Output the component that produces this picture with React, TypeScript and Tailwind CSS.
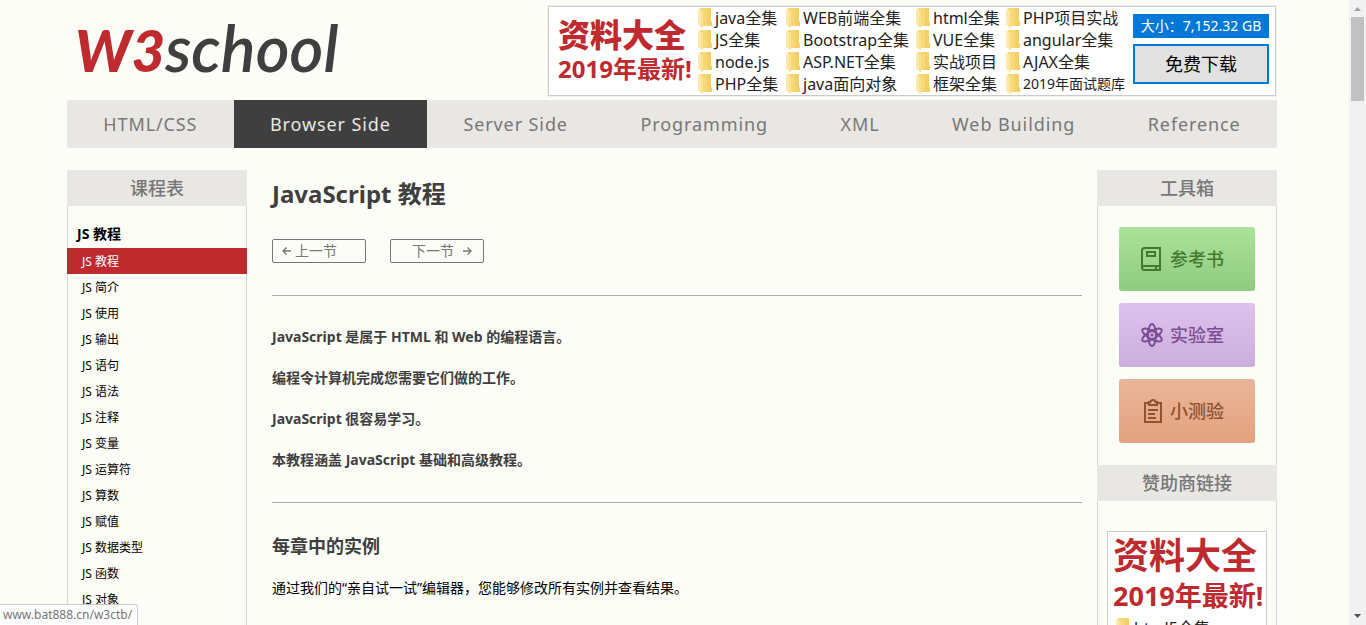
import clsx from "clsx";

const navItems = ["HTML/CSS", "Browser Side", "Server Side", "Programming", "XML", "Web Building", "Reference"];

const courses = [
    "JS 教程", "JS 简介", "JS 使用", "JS 输出", "JS 语句", "JS 语法", "JS 注释", "JS 变量",
    "JS 运算符", "JS 算数", "JS 赋值", "JS 数据类型", "JS 函数", "JS 对象"
];

const adLinks = [
    "java全集", "WEB前端全集", "html全集", "PHP项目实战",
    "JS全集", "Bootstrap全集", "VUE全集", "angular全集",
    "node.js", "ASP.NET全集", "实战项目", "AJAX全集",
    "PHP全集", "java面向对象", "框架全集", "2019年面试题库"
];

const intro = [
    "JavaScript 是属于 HTML 和 Web 的编程语言。",
    "编程令计算机完成您需要它们做的工作。",
    "JavaScript 很容易学习。",
    "本教程涵盖 JavaScript 基础和高级教程。"
];

const FolderIcon = () => (
    <svg width="14" height="20" viewBox="0 0 14 20" className="shrink-0" aria-hidden="true">
        <path d="M2 0H13V13L14 14V18H2Z" fill="#f7d878" />
        <path d="M9 0H13V13L14 14V18H9Z" fill="#f3cf66" />
        <path d="M0 0L5 4V20L0 17Z" fill="#ffe9a9" />
        <path d="M3 2L5 4V20L3 19Z" fill="#fbdf92" />
    </svg>
);

const BookIcon = () => (
    <svg width="22" height="24" viewBox="0 0 22 24" fill="none" stroke="currentColor" strokeWidth="2" aria-hidden="true">
        <path d="M19 19V1H3.500Q1 1 1 3.500V20.500Q1 23 3.500 23H19V19H3Q1 19 1 21M15 19V23" />
        <path d="M6 5H14V9H6Z" />
    </svg>
);

const AtomIcon = () => (
    <svg width="22" height="24" viewBox="0 0 22 24" fill="none" stroke="currentColor" strokeWidth="2" aria-hidden="true">
        <ellipse cx="11" cy="12" rx="4" ry="11" />
        <ellipse cx="11" cy="12" rx="4" ry="11" transform="rotate(60 11 12)" />
        <ellipse cx="11" cy="12" rx="4" ry="11" transform="rotate(120 11 12)" />
        <circle cx="11" cy="12" r="1.500" fill="currentColor" stroke="none" />
    </svg>
);

const ClipboardIcon = () => (
    <svg width="22" height="24" viewBox="-3 0 22 24" fill="none" stroke="currentColor" strokeWidth="2" aria-hidden="true">
        <path d="M5 4H1V23H17V4H13" />
        <path d="M5 3H6.500Q7 1 9 1T11.500 3H13V6H5Z" />
        <path d="M4 11H14M4 15H11M4 19H12" strokeWidth="1.800" />
    </svg>
);

const tools = [
    { label: "参考书", icon: <BookIcon />, color: "from-[#abe299] to-[#8fcb80] text-[#427a30]" },
    { label: "实验室", icon: <AtomIcon />, color: "from-[#dec2ed] to-[#cbaedb] text-[#7d4e96]" },
    { label: "小测验", icon: <ClipboardIcon />, color: "from-[#e9b59a] to-[#e4a27d] text-[#8f5330]" }
];

const PanelTitle = ({ children }: { children: string }) => (
    <h2 className="h-9 bg-[#e8e7e3] text-center text-lg leading-9 font-medium text-[#777]">{children}</h2>
);

const TopAd = () => (
    <div className="flex h-[90px] w-[728px] shrink-0 border border-[#ccc] bg-white pr-[6px] pl-[9px] shadow-[0_0_0_1px_#f0f0ec]">
        <div className="flex w-[140px] shrink-0 flex-col justify-center font-bold whitespace-nowrap text-[#be2a2e]">
            <strong className="text-[32px] leading-9">资料大全</strong>
            <span className="text-2xl leading-8">2019年最新!</span>
        </div>
        <div className="grid flex-1 grid-cols-[88px_130px_90px_1fr] grid-rows-4">
            {adLinks.map((link) => (
                <a key={link} href="#" className={clsx("flex h-[22px] items-center gap-[3px] leading-[22px] whitespace-nowrap text-[#222]", link.startsWith("2019") ? "text-sm" : "text-base")}>
                    <FolderIcon />
                    {link}
                </a>
            ))}
        </div>
        <div className="flex w-[136px] shrink-0 flex-col gap-[6px] pt-[7px]">
            <p className="h-6 bg-[#0078d7] text-center text-sm leading-6 whitespace-nowrap text-white">大小：7,152.32 GB</p>
            <button className="h-10 border-2 border-[#0078d7] bg-[#e1e1e1] text-lg leading-8 text-black">免费下载</button>
        </div>
    </div>
);

const Scrollbar = () => (
    <div className="flex w-[17px] shrink-0 flex-col items-center justify-between bg-[#f1f1f1]" aria-hidden="true">
        <div className="flex flex-col items-center">
            <svg width="17" height="17" viewBox="0 0 17 17"><path d="M5 11L8.500 7L12 11Z" fill="#a3a3a3" /></svg>
            <div className="h-[84px] w-[13px] bg-[#c1c1c1]" />
        </div>
        <svg width="17" height="17" viewBox="0 0 17 17"><path d="M5 6L8.500 10L12 6Z" fill="#505050" /></svg>
    </div>
);

const App = () => {
    return (
        <div className="flex h-screen overflow-hidden bg-[#fdfdf8] font-['Noto_Sans','Noto_Sans_CJK_SC',sans-serif]">
            <div className="min-w-0 flex-1 overflow-hidden pr-[72px] pl-[67px]">
                <header className="flex h-[100px] items-center justify-between pt-[2px] pr-px">
                    <a href="#" className="flex items-baseline pb-2 pl-2 font-['Lato',sans-serif] leading-none whitespace-nowrap italic">
                        <span className="text-[58px] font-black text-[#be2a2e]">W3</span>
                        <span className="text-[65px] font-semibold text-[#3f3f3f]">school</span>
                    </a>
                    <TopAd />
                </header>

                <nav className="flex h-12 bg-[#e8e7e3]">
                    {navItems.map((item) => (
                        <a
                            key={item}
                            href="#"
                            className={clsx(
                                "grow text-center text-lg leading-12 tracking-wider whitespace-nowrap",
                                item === "Browser Side" ? "bg-[#3f3f3f] text-[#e8e7e3]" : "text-[#777]"
                            )}
                        >
                            {item}
                        </a>
                    ))}
                </nav>

                <div className="mt-[22px] flex items-start">
                    <aside className="w-[180px] shrink-0">
                        <PanelTitle>课程表</PanelTitle>
                        <div className="border-x border-[#d4d4d4] pt-[14px] pb-10">
                            <h3 className="pl-[9px] text-sm leading-7 font-bold text-black">JS 教程</h3>
                            <ul>
                                {courses.map((course, index) => (
                                    <li key={course} className="-mx-px">
                                        <a href="#" className={clsx("block h-[26px] pt-px pl-[15px] text-xs leading-[26px]", index === 0 ? "bg-[#be2a2e] text-white" : "text-black")}>
                                            {course}
                                        </a>
                                    </li>
                                ))}
                            </ul>
                        </div>
                    </aside>

                    <main className="min-w-0 flex-1 pr-[15px] pl-[25px] text-sm leading-[21px] text-[#3f3f3f]">
                        <h1 className="pt-[6px] text-2xl leading-9 font-bold">JavaScript 教程</h1>
                        <div className="mt-[27px] flex gap-6 text-[#777]">
                            <a href="#" className="flex h-6 w-[94px] items-center gap-[3px] rounded-xs border border-[#777] pb-px pl-[9px]">
                                <svg width="10" height="10" viewBox="0 0 10 10" fill="none" stroke="currentColor" strokeWidth="1.300"><path d="M9 5H1.500M4.500 1.500L1 5L4.500 8.500" /></svg>
                                上一节
                            </a>
                            <a href="#" className="flex h-6 w-[94px] items-center justify-end gap-2 rounded-xs border border-[#777] pr-[11px] pb-px">
                                下一节
                                <svg width="10" height="10" viewBox="0 0 10 10" fill="none" stroke="currentColor" strokeWidth="1.300"><path d="M1 5H8.500M5.500 1.500L9 5L5.500 8.500" /></svg>
                            </a>
                        </div>
                        <hr className="mt-8 border-[#aaa]" />
                        <div className="flex flex-col gap-5 pt-[30px] pb-8 font-bold">
                            {intro.map((text) => (
                                <p key={text}>{text}</p>
                            ))}
                        </div>
                        <hr className="border-[#aaa]" />
                        <h2 className="mt-[30px] text-lg leading-[26px] font-bold">每章中的实例</h2>
                        <p className="mt-[18px] text-black">通过我们的“亲自试一试”编辑器，您能够修改所有实例并查看结果。</p>
                    </main>

                    <aside className="w-[180px] shrink-0">
                        <PanelTitle>工具箱</PanelTitle>
                        <div className="flex flex-col items-center gap-3 border-x border-[#d4d4d4] pt-[21px] pb-[22px]">
                            {tools.map(({ label, icon, color }) => (
                                <a key={label} href="#" className={clsx("flex h-16 w-[136px] items-center gap-[7px] rounded-[3px] bg-linear-to-b pl-[22px] text-lg font-medium", color)}>
                                    {icon}
                                    {label}
                                </a>
                            ))}
                        </div>
                        <PanelTitle>赞助商链接</PanelTitle>
                        <div className="border-x border-[#d4d4d4] px-[9px] pt-[30px]">
                            <div className="overflow-hidden border border-[#ccc] bg-white pl-[5px] whitespace-nowrap">
                                <strong className="block text-[36px] leading-12 font-bold text-[#be2a2e]">资料大全</strong>
                                <strong className="block text-[27px] leading-8 font-bold text-[#be2a2e]">2019年最新!</strong>
                                <a href="#" className="flex items-center gap-1 pt-1 pl-[3px] text-base text-[#222]">
                                    <FolderIcon />
                                    html5全集
                                </a>
                            </div>
                        </div>
                    </aside>
                </div>
            </div>
            <Scrollbar />

            {/* link target shown by the browser on hover */}
            <div className="absolute bottom-0 left-0 h-[21px] rounded-tr border-t border-r border-[#ccc] bg-[#fdfdfd] pr-[5px] pl-[3px] text-xs leading-5 text-[#777]">
                www.bat888.cn/w3ctb/
            </div>
        </div>
    );
};

export default App;
